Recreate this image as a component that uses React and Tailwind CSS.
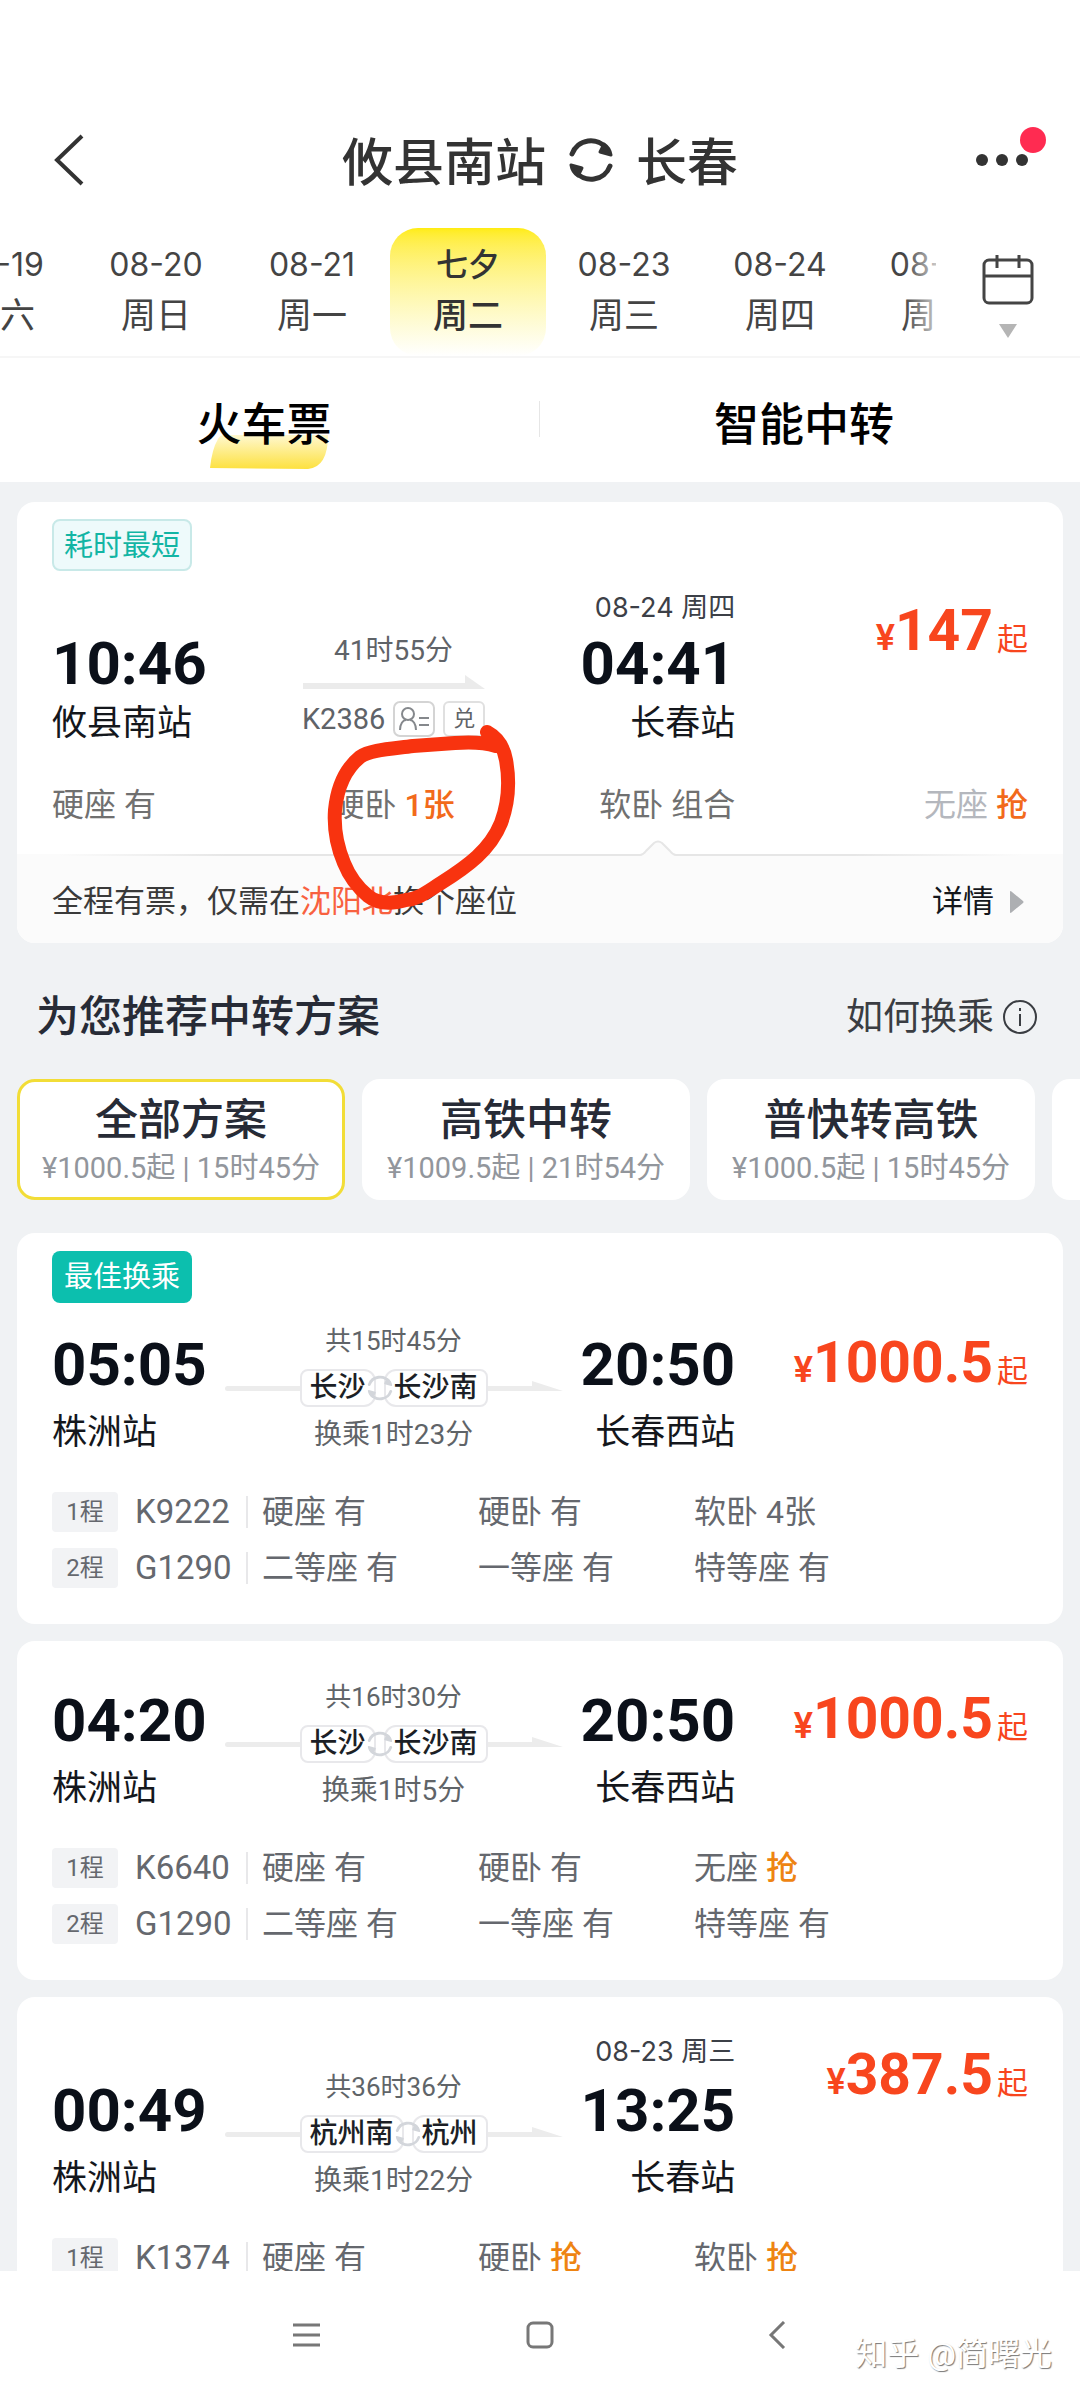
const DATES = [
  { date: "08-19", day: "周六" },
  { date: "08-20", day: "周日" },
  { date: "08-21", day: "周一" },
  { date: "七夕", day: "周二", active: true },
  { date: "08-23", day: "周三" },
  { date: "08-24", day: "周四" },
  { date: "08-25", day: "周五" },
];

const FILTERS = [
  { title: "全部方案", info: "¥1000.5起 | 15时45分", active: true },
  { title: "高铁中转", info: "¥1009.5起 | 21时54分" },
  { title: "普快转高铁", info: "¥1000.5起 | 15时45分" },
  { title: "", info: "" },
];

const PLANS = [
  {
    badge: "最佳换乘",
    start: "05:05",
    from: "株洲站",
    end: "20:50",
    to: "长春西站",
    total: "共15时45分",
    via: ["长沙", "长沙南"],
    transfer: "换乘1时23分",
    price: "1000.5",
    legs: [
      { train: "K9222", seats: [["硬座", "有"], ["硬卧", "有"], ["软卧", "4张"]] },
      { train: "G1290", seats: [["二等座", "有"], ["一等座", "有"], ["特等座", "有"]] },
    ],
  },
  {
    start: "04:20",
    from: "株洲站",
    end: "20:50",
    to: "长春西站",
    total: "共16时30分",
    via: ["长沙", "长沙南"],
    transfer: "换乘1时5分",
    price: "1000.5",
    legs: [
      { train: "K6640", seats: [["硬座", "有"], ["硬卧", "有"], ["无座", "抢"]] },
      { train: "G1290", seats: [["二等座", "有"], ["一等座", "有"], ["特等座", "有"]] },
    ],
  },
  {
    start: "00:49",
    from: "株洲站",
    end: "13:25",
    endDate: "08-23 周三",
    to: "长春站",
    total: "共36时36分",
    via: ["杭州南", "杭州"],
    transfer: "换乘1时22分",
    price: "387.5",
    legs: [{ train: "K1374", seats: [["硬座", "有"], ["硬卧", "抢"], ["软卧", "抢"]] }],
  },
];

const SwapIcon = ({ className }) => (
  <svg
    viewBox="0 0 44 46"
    className={className}
    fill="none"
    stroke="currentColor"
    strokeWidth="5"
    strokeLinecap="round"
    strokeLinejoin="round"
  >
    <path d="M3 17A20 20 0 0 1 38 12" />
    <path d="M41 29A20 20 0 0 1 6 34" />
    <path d="M35 7L31 15L42 18Q41 11 35 7Z" fill="currentColor" strokeWidth="3" />
    <path d="M9 39L13 31L2 28Q3 35 9 39Z" fill="currentColor" strokeWidth="3" />
  </svg>
);

const Header = () => (
  <header className="flex h-[136px] items-center justify-between px-12">
    <button aria-label="返回" className="w-24 text-[#333]">
      <svg viewBox="0 0 44 56" className="h-14 w-11" fill="none" stroke="currentColor" strokeWidth="4">
        <path d="M34 4L9 28L34 52" />
      </svg>
    </button>
    <h1 className="flex items-center gap-[23px] pt-[6px] text-[51px] leading-none font-medium text-[#333]">
      攸县南站
      <SwapIcon className="mb-[6px] h-[46px] w-11" />
      长春
    </h1>
    <button aria-label="更多" className="relative flex w-24 justify-end pr-[3px]">
      <svg viewBox="0 0 54 14" className="h-[14px] w-[54px]" fill="#333">
        <circle cx="7" cy="7" r="6" />
        <circle cx="27" cy="7" r="6" />
        <circle cx="47" cy="7" r="6" />
      </svg>
      <span className="absolute -top-[26px] -right-[14px] size-[26px] rounded-full bg-[#ff2b51]" />
    </button>
  </header>
);

const DateStrip = () => (
  <nav className="flex h-[130px] border-b-2 border-[#f6f6f6]">
    <div className="relative flex flex-1 justify-center overflow-hidden">
      {DATES.map((item) => (
        <button
          key={item.date}
          className={
            item.active
              ? "w-[156px] shrink-0 rounded-[28px] bg-gradient-to-b from-[#ffec0e] to-white pb-[2px] text-center font-medium text-[#333]"
              : "w-[156px] shrink-0 pb-[2px] text-center text-[#444]"
          }
        >
          <span className="block h-11 font-['Inter','Noto_Sans_CJK_SC',sans-serif] text-[32px] leading-[44px]">{item.date}</span>
          <span className="mt-2 block h-11 text-[35px] leading-[44px]">{item.day}</span>
        </button>
      ))}
      <div className="absolute inset-y-0 right-0 w-8 bg-gradient-to-r from-transparent to-white/70" />
    </div>
    <button aria-label="日历" className="flex w-36 flex-col items-center pt-6 text-[#444]">
      <svg viewBox="0 0 54 54" className="size-[54px]" fill="none" stroke="currentColor" strokeWidth="3">
        <rect x="3" y="8" width="48" height="43" rx="5" />
        <path d="M3 24H51M16 3V16M38 3V16" />
      </svg>
      <svg viewBox="0 0 18 14" className="mt-[18px] h-[14px] w-[18px]" fill="#b5b5b5">
        <path d="M0 0H18L9 14Z" />
      </svg>
    </button>
  </nav>
);

const Tabs = () => (
  <div className="grid h-[124px] grid-cols-2 items-center text-[45px] leading-none font-medium text-black">
    <button className="relative isolate pt-[10px] pr-3">
      火车票
      <svg viewBox="0 0 120 34" className="absolute top-[42px] left-[210px] -z-10 h-[34px] w-[120px]">
        <defs>
          <linearGradient id="tabMark" x1="0" y1="0" x2="0" y2="1">
            <stop offset="0" stopColor="#fff8cf" />
            <stop offset="1" stopColor="#fde13f" />
          </linearGradient>
        </defs>
        <path d="M8 4Q10 0 14 0H118Q118 32 98 34L0 33Q2 14 8 4Z" fill="url(#tabMark)" />
      </svg>
      <span className="absolute top-2 right-0 h-9 w-px bg-[#e6e6e6]" />
    </button>
    <button className="pt-[10px] pr-3">智能中转</button>
  </div>
);

const Price = ({ value }) => (
  <p className="flex flex-1 items-baseline justify-end pt-[30px] leading-[60px] text-[#f8461e]">
    <span className="text-[36px] font-semibold">¥</span>
    <span className="text-[57px] font-bold">{value}</span>
    <span className="ml-1 text-[31px]">起</span>
  </p>
);

const Seat = ({ name, left, hot, muted }) => (
  <span className={muted ? "text-[#b4b7bd]" : ""}>
    {name} <span className={hot || ""}>{left}</span>
  </span>
);

const DirectCard = () => (
  <section className="relative overflow-hidden rounded-[18px] bg-white pt-[17px]">
    <span className="ml-[35px] inline-flex h-[52px] items-center rounded-lg border-2 border-[#c8e9e8] bg-[#eefafb] px-[10px] pt-[3px] align-top text-[29px] text-[#12b5a4]">
      耗时最短
    </span>
    <div className="flex px-[35px]">
      <div className="grid w-[70%] grid-cols-[1fr_338px_1fr] items-end">
        <div>
          <p className="text-[60px] leading-[60px] font-bold text-[#0b1019]">10:46</p>
          <p className="mt-1 h-[52px] text-[35px] leading-[52px] text-[#14171c]">攸县南站</p>
        </div>
        <div className="flex flex-col items-center pb-[13px] text-[#5f6368]">
          <p className="text-[28px] leading-8">41时55分</p>
          <svg viewBox="0 0 182 14" className="my-2 h-[14px] w-[182px]" fill="#ebebeb">
            <path d="M0 8H162V0L182 14H0Z" />
          </svg>
          <p className="mt-1 flex h-9 items-center gap-2 text-[29px] leading-none">
            K2386
            <svg viewBox="0 0 42 36" className="h-9 w-[42px]" fill="none" stroke="#85888c" strokeWidth="2">
              <rect x="1" y="1" width="40" height="34" rx="6" stroke="#d4d4d4" />
              <circle cx="15" cy="13" r="6" />
              <path d="M7 29C7 23 10 19 13 19M23 29C23 23 20 19 17 19M26 17H36M26 24H36" />
            </svg>
            <span className="flex h-9 w-[42px] items-center justify-center rounded-md border-2 border-[#e0e0e0] text-[22px]">兑</span>
          </p>
        </div>
        <div className="pt-5 text-right">
          <p className="font-['Inter','Noto_Sans_CJK_SC',sans-serif] text-[27px] leading-[34px] text-[#3c4047]">08-24 周四</p>
          <p className="mt-[9px] text-[60px] leading-[60px] font-bold text-[#0b1019]">04:41</p>
          <p className="mt-1 h-[52px] text-[35px] leading-[52px] text-[#14171c]">长春站</p>
        </div>
      </div>
      <Price value="147" />
    </div>
    <div className="mt-[35px] flex px-[35px] text-[32px] leading-10 text-[#707070]">
      <div className="grid w-[70%] grid-cols-3">
        <Seat name="硬座" left="有" />
        <span className="text-center">
          <Seat name="硬卧" left="1张" hot="font-medium text-[#f26a1b]" />
        </span>
        <span className="text-right">
          <Seat name="软卧" left="组合" />
        </span>
      </div>
      <span className="flex-1 text-right">
        <Seat name="无座" left="抢" muted hot="font-medium text-[#f26a1b]" />
      </span>
    </div>
    <div className="relative mt-[29px] flex h-[89px] items-center justify-between bg-[#fbfbfb] px-[35px] pt-[7px] text-[31px] text-[#3a3a3a]">
      <div className="absolute inset-x-0 top-0 h-[2px] bg-[linear-gradient(to_right,transparent_4%,#e6e6e6_20%,#e6e6e6_80%,transparent_96%)]" />
      <svg viewBox="0 0 36 16" className="absolute -top-[14px] left-[623px] h-4 w-9">
        <path d="M0 15Q3 15 6 11L14 3Q18 0 22 3L30 11Q33 15 36 15V16H0Z" fill="#fbfbfb" />
        <path d="M0 15Q3 15 6 11L14 3Q18 0 22 3L30 11Q33 15 36 15" fill="none" stroke="#e6e6e6" strokeWidth="2" />
      </svg>
      <p>
        全程有票，仅需在<span className="text-[#f8613f]">沈阳北</span>换个座位
      </p>
      <a href="#detail" className="flex items-center gap-4 text-[#14171c]">
        详情
        <svg viewBox="0 0 14 22" className="mr-1 h-[22px] w-[14px]" fill="#adafb2">
          <path d="M0 1Q0 -1 2 1L13 10Q14 11 13 12L2 21Q0 23 0 21Z" />
        </svg>
      </a>
    </div>
    {/* hand-drawn marker circle */}
    <svg
      viewBox="0 0 200 200"
      className="pointer-events-none absolute top-[218px] left-[303px] size-[200px]"
      fill="none"
      stroke="#f8330f"
      strokeWidth="14"
      strokeLinecap="round"
      strokeLinejoin="round"
    >
      <path d="M167 12C178 18 184 28 186 40C190 62 188 84 181 103C170 130 148 146 121 163C105 173 98 179 86 180C72 184 58 184 48 176C36 166 28 153 24 143C16 124 14 104 15 90C17 70 24 50 40 37C50 30 70 29 93 26L135 23Q160 21 176 26" />
    </svg>
  </section>
);

const SeatLeft = ({ left }) => <span className={left === "抢" ? "font-medium text-[#ee8412]" : ""}>{left}</span>;

const PlanCard = ({ plan }) => (
  <section className="rounded-[18px] bg-white px-[35px] pt-[18px] pb-9">
    {plan.badge && (
      <span className="inline-flex h-[52px] items-center rounded-lg bg-[#0cbfae] px-3 pt-[2px] align-top text-[29px] text-white">
        {plan.badge}
      </span>
    )}
    <div className="flex">
      <div className="grid w-[70%] grid-cols-[1fr_338px_1fr] items-end">
        <div>
          <p className="text-[60px] leading-[60px] font-bold text-[#0b1019]">{plan.start}</p>
          <p className="mt-3 h-[52px] text-[35px] leading-[52px] text-[#14171c]">{plan.from}</p>
        </div>
        <div className="pb-2 text-center text-[#606468]">
          <p className="text-[26px] leading-8">{plan.total}</p>
          <div className="my-3 flex items-center">
            <span className="h-[5px] flex-1 rounded-l-full bg-[#ececec]" />
            <div className="flex items-center text-[28px] font-medium text-[#1c1f26]">
              <span className="rounded-lg rounded-r-xl border-2 border-[#e8e8eb] px-2 leading-[34px]">{plan.via[0]}</span>
              <SwapIcon className="relative -mx-[9px] h-[26px] w-[26px] text-[#d3d6db]" />
              <span className="rounded-lg rounded-l-xl border-2 border-[#e8e8eb] px-2 leading-[34px]">{plan.via[1]}</span>
            </div>
            <svg viewBox="0 0 75 15" preserveAspectRatio="none" className="h-[15px] flex-1" fill="#ececec">
              <path d="M0 5H44V0L75 10H0Z" />
            </svg>
          </div>
          <p className="text-[28px] leading-8">{plan.transfer}</p>
        </div>
        <div className="pt-5 text-right">
          {plan.endDate && (
            <p className="font-['Inter','Noto_Sans_CJK_SC',sans-serif] text-[27px] leading-[34px] text-[#3c4047]">{plan.endDate}</p>
          )}
          <p className="mt-3 text-[60px] leading-[60px] font-bold text-[#0b1019]">{plan.end}</p>
          <p className="mt-3 h-[52px] text-[35px] leading-[52px] text-[#14171c]">{plan.to}</p>
        </div>
      </div>
      <Price value={plan.price} />
    </div>
    <div className="mt-[33px] flex flex-col gap-4 text-[32px] leading-10 text-[#65686e]">
      {plan.legs.map((leg, index) => (
        <div key={index} className="flex h-10 items-center">
          <span className="w-[66px] rounded bg-[#f2f3f5] text-center text-[24px] leading-10">{index + 1}程</span>
          <span className="ml-[17px] w-[111px] text-[33px]">{leg.train}</span>
          <span className="h-8 w-[2px] bg-[#e8e8ea]" />
          <div className="ml-[14px] grid w-[648px] grid-cols-3">
            {leg.seats.map(([name, left]) => (
              <span key={name}>
                {name} <SeatLeft left={left} />
              </span>
            ))}
          </div>
        </div>
      ))}
    </div>
  </section>
);

const SystemBar = () => (
  <footer className="relative flex h-[129px] shrink-0 justify-center gap-[206px] bg-white pt-[50px] text-[#777]">
    <button aria-label="菜单" className="h-7">
      <svg viewBox="0 0 28 28" className="size-7" fill="none" stroke="currentColor" strokeWidth="3">
        <path d="M1 4H28M1 14H28M1 24H28" />
      </svg>
    </button>
    <button aria-label="主页" className="h-7">
      <svg viewBox="0 0 28 28" className="size-7" fill="none" stroke="currentColor" strokeWidth="3">
        <rect x="2" y="2" width="24" height="24" rx="5" />
      </svg>
    </button>
    <button aria-label="后退" className="h-7">
      <svg viewBox="0 0 28 28" className="size-7" fill="none" stroke="currentColor" strokeWidth="3">
        <path d="M24 1L11 14L24 27" />
      </svg>
    </button>
    <p className="absolute right-7 bottom-6 text-[32px] leading-[44px] text-white [text-shadow:1px_1px_1px_#777]">知乎 @简曙光</p>
  </footer>
);

export default function App() {
  return (
    <main className="flex h-screen flex-col overflow-hidden bg-[#f0f2f4] font-['Roboto','Noto_Sans_CJK_SC',sans-serif]">
      <div className="shrink-0 bg-white pt-[92px]">
        <Header />
        <DateStrip />
        <Tabs />
      </div>
      <div className="min-h-0 flex-1 overflow-hidden px-[17px] pt-5">
        <DirectCard />
        <div className="mt-[46px] flex h-14 items-center justify-between px-[19px]">
          <h2 className="text-[43px] leading-none font-medium text-[#272b36]">为您推荐中转方案</h2>
          <a href="#help" className="flex items-center gap-2 pr-[6px] text-[37px] leading-none text-[#3a3d42]">
            如何换乘
            <svg viewBox="0 0 36 36" className="size-9" fill="none" stroke="currentColor" strokeWidth="2">
              <circle cx="18" cy="18" r="16" />
              <path d="M18 15V27M18 9V12" />
            </svg>
          </a>
        </div>
        <div className="-mr-[17px] mt-[34px] mb-[33px] flex gap-[17px] overflow-hidden">
          {FILTERS.map((filter, index) => (
            <button
              key={index}
              className={
                filter.active
                  ? "h-[121px] w-[328px] shrink-0 rounded-[18px] border-3 border-[#f2dd37] bg-white pt-1"
                  : "h-[121px] w-[328px] shrink-0 rounded-[18px] border-3 border-white bg-white pt-1"
              }
            >
              <span className="block text-[43px] leading-[52px] font-medium text-[#272b36]">{filter.title}</span>
              <span className="block text-[29px] leading-[44px] text-[#92969c]">{filter.info}</span>
            </button>
          ))}
        </div>
        <div className="flex flex-col gap-[17px]">
          {PLANS.map((plan, index) => (
            <PlanCard key={index} plan={plan} />
          ))}
        </div>
      </div>
      <SystemBar />
    </main>
  );
}
